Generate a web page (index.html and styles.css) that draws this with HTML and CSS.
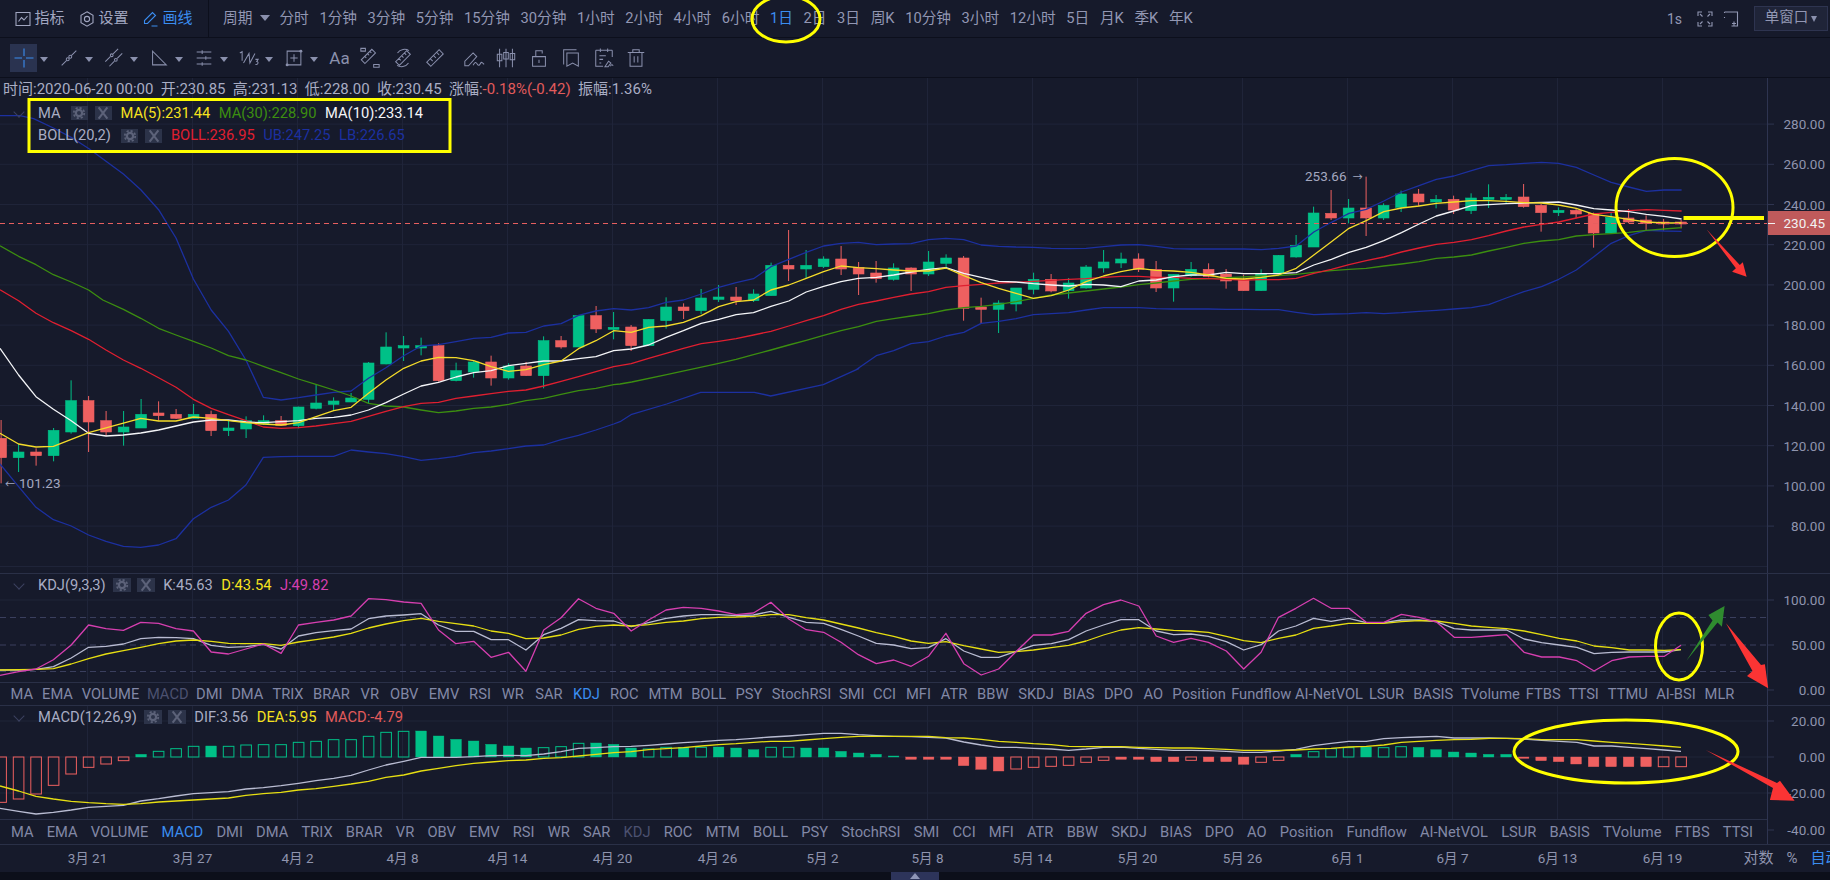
FILE: index.html
```html
<!DOCTYPE html>
<html lang="zh">
<head>
<meta charset="utf-8">
<title>K线图</title>
<link rel="stylesheet" href="styles.css">
</head>
<body>
<svg class="defs" width="0" height="0">
  <symbol id="gear" viewBox="0 0 16 16">
    <circle cx="8" cy="8" r="3.6" fill="none" stroke="#5c6279" stroke-width="2.6"/>
    <circle cx="8" cy="8" r="6" fill="none" stroke="#5c6279" stroke-width="2" stroke-dasharray="2.5 2.2"/>
  </symbol>
  <symbol id="cross" viewBox="0 0 16 16">
    <path d="M3 1.500l10 13M13 1.500L3 14.500" fill="none" stroke="#5c6279" stroke-width="2.4"/>
  </symbol>
</svg>

<header class="topbar">
  <nav class="menu">
    <a class="menu-item"><svg class="i16" viewBox="0 0 16 16"><path d="M1 1.500h14v13H1zM3.500 10.500l3-4 2.500 2.500 3.500-4"/></svg>指标</a>
    <a class="menu-item"><svg class="i16" viewBox="0 0 16 16"><path d="M8 .8l6 3.400v7.600l-6 3.400-6-3.400V4.200z"/><circle cx="8" cy="8" r="2.600"/></svg>设置</a>
    <a class="menu-item active"><svg class="i16" viewBox="0 0 16 16"><path d="M1.500 12.500V9.500L9.500 1.500l3 3-8 8zM8.500 15h6"/></svg>画线</a>
  </nav>
  <div class="periods">
    <span class="period-head">周期<i class="caret big"></i></span>
    <a>分时</a><a>1分钟</a><a>3分钟</a><a>5分钟</a><a>15分钟</a><a>30分钟</a><a>1小时</a><a>2小时</a><a>4小时</a><a>6小时</a><a class="on">1日</a><a>2日</a><a>3日</a><a>周K</a><a>10分钟</a><a>3小时</a><a>12小时</a><a>5日</a><a>月K</a><a>季K</a><a>年K</a>
  </div>
  <div class="top-right">
    <span class="speed">1s</span>
    <svg class="i16" viewBox="0 0 16 16"><path d="M1 5V1h4M11 1h4v4M15 11v4h-4M5 15H1v-4M3 3l2.500 2.500M13 3l-2.500 2.500M13 13l-2.500-2.500M3 13l2.500-2.500"/></svg>
    <svg class="i16 window-icon" viewBox="0 0 16 16"><path d="M1.500 1h13v14h-6M1.500 1v1M1.500 6v1M11 10.500v4M9 12.500h4"/></svg>
    <span class="window-select">单窗口<i class="caret small"></i></span>
  </div>
</header>

<div class="toolbar">
  <button class="tool selected"><svg class="i24 blue" viewBox="0 0 24 24"><path d="M2.500 12h7.500M14 12h7.500M12 2.500V10M12 14v7.500"/></svg></button><i class="caret tool-caret"></i>
  <button class="tool"><svg class="i24" viewBox="0 0 24 24"><path d="M4 20l5.500-5.500M14.500 9.500L20 4"/><circle cx="10.600" cy="13.400" r="1.600"/><circle cx="13.400" cy="10.600" r="1.600"/></svg></button><i class="caret tool-caret"></i>
  <button class="tool"><svg class="i24" viewBox="0 0 24 24"><path d="M2.500 16L8 10.500M11 7.500L16.500 2M7 21l5.500-5.500M15.500 12.500L21 7"/><circle cx="9.500" cy="9" r="1.500"/><circle cx="14" cy="14" r="1.500"/></svg></button><i class="caret tool-caret"></i>
  <button class="tool"><svg class="i24" viewBox="0 0 24 24"><path d="M5 4.500V19.500H20z"/></svg></button><i class="caret tool-caret"></i>
  <button class="tool"><svg class="i24" viewBox="0 0 24 24"><path d="M4 5.500h16M4 12h16M4 18.500h16M10 3.500v4M14 10v4M10 16.500v4"/></svg></button><i class="caret tool-caret"></i>
  <button class="tool"><svg class="i24" viewBox="0 0 24 24"><path d="M2 6.500l2.500-1.500v10M6 17.500L12 7l1 10.500L18.500 7M19 13.500h3l-1.500 2.200c2 .2 2 4-1.500 3.300"/></svg></button><i class="caret tool-caret"></i>
  <button class="tool"><svg class="i24" viewBox="0 0 24 24"><path d="M4.500 4.500h15v15h-15zM8 12h8M12 8v8"/><circle class="dot" cx="19.500" cy="4.500" r="1.600"/><circle class="dot" cx="4.500" cy="19.500" r="1.600"/></svg></button><i class="caret tool-caret"></i>
  <button class="tool plain text-tool">Aa</button>
  <button class="tool plain"><svg class="i24" viewBox="0 0 24 24"><path d="M6.500 18L18 6.500l-4-4L2.500 14zM6.500 10.500l1.500 1.500M9.500 7.500l1.500 1.500M12 5l1.500 1.500M2 1.500h5v3H2zM16 19h6v3h-6z"/></svg></button>
  <button class="tool plain"><svg class="i24" viewBox="0 0 24 24"><path d="M8 20L20 8l-4-4L4 16zM7.500 12.500l2 2M10.500 9.500l2 2M13.500 6.500l2 2M6 6.500C9 2 15 1.500 18.500 4M18 17.500C15 22 9 22.500 5.500 20"/></svg></button>
  <button class="tool plain"><svg class="i24" viewBox="0 0 24 24"><path d="M7.500 21L21 7.500 16.500 3 3 16.500zM7 13l2.500 2.500M10.500 9.500l2.500 2.500M14 6l2.500 2.500"/></svg></button>
  <button class="tool plain pen"><svg class="i24" viewBox="0 0 24 24"><path d="M2 20.500v-5l9-9 4 4-9 10zM11 20c2-4 3-4 4.500-1.500S18 20 19 18s2-1.500 4 1"/></svg></button>
  <button class="tool plain"><svg class="i24" viewBox="0 0 24 24"><path d="M5 2v20M12 2v20M19 2v20M2.500 8h5v7h-5zM9.500 6h5v7h-5zM16.500 7h5v7h-5z"/></svg></button>
  <button class="tool plain"><svg class="i24" viewBox="0 0 24 24"><path d="M5 10.500h14V21H5zM8.500 10.500V4h7v3M12 14v3.500"/></svg></button>
  <button class="tool plain"><svg class="i24" viewBox="0 0 24 24"><path d="M4 19V3h14M7.500 6.500H20V21l-6.200-3.500L7.500 21z"/></svg></button>
  <button class="tool plain"><svg class="i24" viewBox="0 0 24 24"><path d="M3 3.500h18M3 3.500V21h8M21 3.500V11M8 1.500v4M16 1.500v4M7 9.500h7M7 13.500h4M7 17.500h2M13 21.500l4-6 2.500 2-3 4zM19 21c1-2 2-2 3-.5"/></svg></button>
  <button class="tool plain"><svg class="i24" viewBox="0 0 24 24"><path d="M3 6h18M8.500 6V3h7v3M5.500 6v15h13V6M10 10v7M14 10v7"/></svg></button>
</div>

<main class="chart">
  <section class="pane pane-main">
    <div class="pane-body">
      <svg class="plot" id="plot-main" viewBox="0 78 1767 495"></svg>
      <div class="info">
        <span>时间:2020-06-20 00:00</span><span>开:230.85</span><span>高:231.13</span><span>低:228.00</span><span>收:230.45</span><span>涨幅:<em class="down">-0.18%(-0.42)</em></span><span>振幅:1.36%</span>
      </div>
      <div class="legend">
        <div class="legend-row">
          <b class="chev"></b><span class="name wide">MA</span>
          <i class="mini"><svg><use href="#gear"/></svg></i><i class="mini"><svg><use href="#cross"/></svg></i>
          <span class="c-yellow">MA(5):231.44</span><span class="c-green">MA(30):228.90</span><span class="c-white">MA(10):233.14</span>
        </div>
        <div class="legend-row">
          <span class="name wide">BOLL(20,2)</span>
          <i class="mini"><svg><use href="#gear"/></svg></i><i class="mini"><svg><use href="#cross"/></svg></i>
          <span class="c-red">BOLL:236.95</span><span class="c-blue">UB:247.25</span><span class="c-blue">LB:226.65</span>
        </div>
      </div>
    </div>
    <svg class="yaxis" id="axis-main" viewBox="1767 78 63 495"></svg>
  </section>

  <section class="pane pane-kdj">
    <div class="pane-body">
      <svg class="plot" id="plot-kdj" viewBox="0 574 1767 108"></svg>
      <div class="legend sub-legend">
        <div class="legend-row">
          <b class="chev"></b><span class="name">KDJ(9,3,3)</span>
          <i class="mini"><svg><use href="#gear"/></svg></i><i class="mini"><svg><use href="#cross"/></svg></i>
          <span class="c-soft">K:45.63</span><span class="c-yellow">D:43.54</span><span class="c-pink">J:49.82</span>
        </div>
      </div>
      <div class="tabs tabs-fit">
        <a>MA</a><a>EMA</a><a>VOLUME</a><a class="dim">MACD</a><a>DMI</a><a>DMA</a><a>TRIX</a><a>BRAR</a><a>VR</a><a>OBV</a><a>EMV</a><a>RSI</a><a>WR</a><a>SAR</a><a class="on">KDJ</a><a>ROC</a><a>MTM</a><a>BOLL</a><a>PSY</a><a>StochRSI</a><a>SMI</a><a>CCI</a><a>MFI</a><a>ATR</a><a>BBW</a><a>SKDJ</a><a>BIAS</a><a>DPO</a><a>AO</a><a>Position</a><a>Fundflow</a><a>AI-NetVOL</a><a>LSUR</a><a>BASIS</a><a>TVolume</a><a>FTBS</a><a>TTSI</a><a>TTMU</a><a>AI-BSI</a><a>MLR</a>
      </div>
    </div>
    <svg class="yaxis" id="axis-kdj" viewBox="1767 574 63 131"></svg>
  </section>

  <section class="pane pane-macd">
    <div class="pane-body">
      <svg class="plot" id="plot-macd" viewBox="0 706 1767 113"></svg>
      <div class="legend sub-legend">
        <div class="legend-row">
          <b class="chev"></b><span class="name">MACD(12,26,9)</span>
          <i class="mini"><svg><use href="#gear"/></svg></i><i class="mini"><svg><use href="#cross"/></svg></i>
          <span class="c-soft">DIF:3.56</span><span class="c-yellow">DEA:5.95</span><span class="down">MACD:-4.79</span>
        </div>
      </div>
      <div class="tabs tabs-flow">
        <a>MA</a><a>EMA</a><a>VOLUME</a><a class="on">MACD</a><a>DMI</a><a>DMA</a><a>TRIX</a><a>BRAR</a><a>VR</a><a>OBV</a><a>EMV</a><a>RSI</a><a>WR</a><a>SAR</a><a class="dim">KDJ</a><a>ROC</a><a>MTM</a><a>BOLL</a><a>PSY</a><a>StochRSI</a><a>SMI</a><a>CCI</a><a>MFI</a><a>ATR</a><a>BBW</a><a>SKDJ</a><a>BIAS</a><a>DPO</a><a>AO</a><a>Position</a><a>Fundflow</a><a>AI-NetVOL</a><a>LSUR</a><a>BASIS</a><a>TVolume</a><a>FTBS</a><a>TTSI</a>
      </div>
    </div>
    <svg class="yaxis" id="axis-macd" viewBox="1767 706 63 138"></svg>
  </section>

  <div class="timebar">
    <span>3月 21</span><span>3月 27</span><span>4月 2</span><span>4月 8</span><span>4月 14</span><span>4月 20</span><span>4月 26</span><span>5月 2</span><span>5月 8</span><span>5月 14</span><span>5月 20</span><span>5月 26</span><span>6月 1</span><span>6月 7</span><span>6月 13</span><span>6月 19</span>
    <div class="scale"><a>对数</a><a>%</a><a class="on">自动</a></div>
  </div>
</main>

<footer class="foot"><button class="handle"><i></i></button></footer>

<svg class="annot" id="annot" viewBox="0 0 1830 880">
  <rect class="mark" x="29" y="99.500" width="421" height="52"/>
  <ellipse class="mark" cx="786" cy="19" rx="34" ry="23"/>
  <ellipse class="mark" cx="1674.500" cy="207.500" rx="58.500" ry="49"/>
  <rect class="mark-fill" x="1683.500" y="216" width="80.500" height="4"/>
  <ellipse class="mark" cx="1679" cy="646.500" rx="23.500" ry="33.500"/>
  <ellipse class="mark" cx="1626" cy="751.500" rx="112" ry="31.500"/>
  <polygon class="arrow-red" points="1706.500,229.300 1739.800,265 1742.800,262.300 1746.600,276.700 1732.100,271.700 1735.900,268.300"/>
  <polygon class="arrow-green" points="1686.400,660.700 1712.500,620.500 1708.400,615 1724.600,606 1721.900,626.700 1717.500,622.500"/>
  <polygon class="arrow-red" points="1726,623.300 1761,665 1764.900,664.300 1768.200,688.300 1747,676 1752.500,671"/>
  <polygon class="arrow-red" points="1705.700,750 1777,783 1780,780.700 1794.600,800.700 1769.900,800 1773,788"/>
</svg>
<script src="chart.js"></script>
</body>
</html>
```

FILE: styles.css
```css
* { box-sizing: border-box; }
html, body { margin: 0; padding: 0; }
body {
  position: relative;
  width: 1830px;
  height: 880px;
  overflow: hidden;
  display: flex;
  flex-direction: column;
  background: #161a2b;
  color: #9297b3;
  font-family: Roboto, "Noto Sans CJK SC", "Liberation Sans", sans-serif;
  font-size: 15px;
  line-height: 1;
}
a, span, em, i, b { font-style: normal; font-weight: 400; }
.defs { position: absolute; }

.i16, .i24 { fill: none; stroke: currentColor; stroke-width: 1.1; flex: none; }
.i16 { width: 16px; height: 16px; }
.i24 { width: 22px; height: 22px; stroke: #8a90ad; }
.i24.blue { stroke: #3b8df0; width: 24px; height: 24px; }

.caret { display: inline-block; width: 0; height: 0; border-style: solid; border-color: #8a90ad transparent transparent; }
.caret.big { border-width: 6px 5px 0; margin-left: 8px; }
.caret.small { border-width: 6px 3.5px 0; margin-left: 3px; }
.tool-caret { border-width: 5px 4px 0; margin: 3px 7px 0 3px; width: 8px; flex: none; }

.topbar {
  height: 38px;
  flex: none;
  display: flex;
  align-items: center;
  border-bottom: 1px solid #0c0f1c;
}
.menu {
  height: 37px;
  width: 209px;
  flex: none;
  display: flex;
  align-items: center;
  gap: 14px;
  padding-left: 14.500px;
  border-right: 1px solid #0c0f1c;
  color: #a1a6c0;
}
.menu-item { display: flex; align-items: center; gap: 4px; }
.menu-item.active { color: #3b8df0; }
.periods { display: flex; align-items: center; gap: 10.600px; padding-left: 14px; color: #9297b3; font-size: 14.700px; }
.period-head { display: flex; align-items: center; margin-right: -1.600px; }
.periods .on { color: #3b8df0; }
.top-right { margin-left: auto; display: flex; align-items: center; padding-right: 2px; }
.speed { margin-right: 15px; font-size: 14px; }
.window-icon { margin: 0 15px 0 10px; }
.window-select {
  width: 74px;
  height: 25px;
  display: flex;
  align-items: center;
  justify-content: center;
  background: #1f2438;
  border: 1px solid #2e3450;
  font-size: 14.500px;
}

.toolbar {
  height: 40px;
  flex: none;
  display: flex;
  align-items: center;
  padding-left: 10px;
  border-bottom: 1px solid #0c0f1c;
}
.tool {
  width: 27px;
  height: 28px;
  padding: 0;
  flex: none;
  display: flex;
  align-items: center;
  justify-content: center;
  background: none;
  border: 0;
  color: #8a90ad;
  font: 17px Roboto, sans-serif;
}
.tool.selected { background: #2a3350; }
.tool.plain { width: 32.500px; }
.tool.text-tool { width: 29px; }
.tool.pen { margin-left: 6px; }
.dot { fill: #8a90ad; stroke: none; }

.chart { flex: none; display: flex; flex-direction: column; }
.pane { display: flex; border-bottom: 1px solid #2a3047; flex: none; }
.pane-main { height: 496px; }
.pane-kdj { height: 132px; }
.pane-macd { height: 139px; }
.pane-body { position: relative; width: 1767px; flex: none; display: flex; flex-direction: column; }
.plot { display: block; width: 1767px; flex: none; overflow: hidden; }
.pane-main .plot { height: 495px; }
.pane-kdj .plot { height: 108px; }
.pane-macd .plot { height: 113px; }
.yaxis { display: block; width: 63px; height: 100%; flex: none; overflow: hidden; }

.grid { stroke: #1f2439; stroke-width: 1; fill: none; }
.ref { stroke: #3a3f5e; stroke-width: 1; stroke-dasharray: 6 4; }
.ln { fill: none; stroke-width: 1.300; stroke-linejoin: round; }
.ln-ma5 { stroke: #f5dc2a; }
.ln-ma10 { stroke: #f4f5f8; }
.ln-ma30 { stroke: #3c8e10; }
.ln-boll { stroke: #e01f30; }
.ln-band { stroke: #1c30a0; }
.ln-k { stroke: #b9bcd2; }
.ln-d { stroke: #e6de12; }
.ln-j { stroke: #d63fb0; }
.up { fill: #00c087; stroke: #00c087; }
.dn { fill: #ee6060; stroke: #ee6060; }
.up-h { fill: none; stroke: #00c087; }
.dn-h { fill: none; stroke: #ee6060; }
.wick-up { stroke: #00c087; }
.wick-dn { stroke: #ee6060; }
.last-line { stroke: #e65f5f; stroke-dasharray: 5 4; stroke-width: 1; }
.note { fill: #a4a8c0; font-size: 13.500px; }
.note-arrow { font-size: 10px; }
.ax-line { stroke: #2e3450; stroke-width: 1; }
.ax-text { fill: #8f94ae; font-size: 13.500px; text-anchor: end; }
.ax-tag { fill: #bf5a5b; }
.ax-tag-text { fill: #f2f2f2; font-size: 13.500px; text-anchor: end; }
.ax-tick { stroke: #f2f2f2; stroke-width: 1; }

.info {
  position: absolute;
  top: 4px;
  left: 3px;
  display: flex;
  gap: 7.300px;
  color: #a9adc4;
  white-space: nowrap;
}
.down { color: #e25b5b; }
.legend { position: absolute; left: 38px; top: 24px; white-space: nowrap; font-size: 14.700px; }
.legend-row { position: relative; display: flex; align-items: center; height: 22.500px; gap: 8.500px; }
.name { color: #a9adc4; margin-right: -1px; }
.name.wide { margin-right: 1.500px; }
.chev {
  position: absolute;
  left: -23px;
  top: 6px;
  width: 8px;
  height: 8px;
  border: solid #3c4260;
  border-width: 0 1px 1px 0;
  transform: rotate(45deg);
}
.mini { width: 17.500px; height: 14px; display: flex; align-items: center; justify-content: center; background: #2c3349; margin-right: -2px; flex: none; }
.mini + .mini { margin-right: 0; }
.mini svg { width: 14px; height: 14px; }
.c-yellow { color: #f6e21e; }
.c-green { color: #3c8e10; }
.c-white { color: #f4f5f8; }
.c-red { color: #e01f30; }
.c-blue { color: #1c30a0; }
.c-soft { color: #a9adc4; }
.c-pink { color: #d63fb0; }
.sub-legend { top: 0; }

.tabs {
  display: grid;
  height: 24px;
  flex: none;
  align-items: center;
  border-top: 1px solid #2a3047;
  color: #8288a6;
  white-space: nowrap;
  overflow: hidden;
  font-size: 14.700px;
}
.tabs a { text-align: center; }
.tabs .dim { color: #4c5170; }
.tabs .on { color: #3b8df0; }
.tabs-fit {
  padding-left: 6px;
  grid-template-columns: 31.500px 40px 66px 48.500px 34.500px 41.500px 40px 47px 29.500px 39.500px 40px 32px 33.500px 39px 36px 39.500px 43px 43.500px 37px 68px 32.500px 33px 35px 36px 41.500px 45px 40.500px 39px 30.500px 61px 63.500px 72px 43px 50.500px 64px 41.500px 39.500px 48.500px 48px 39px;
}
.tabs-flow { display: flex; gap: 13.200px; padding-left: 11px; height: 25px; }
.tabs-flow a { flex: none; }

.timebar {
  position: relative;
  height: 27px;
  flex: none;
  display: flex;
  align-items: center;
  padding-left: 35px;
  color: #8f94ae;
  font-size: 13.500px;
  overflow: hidden;
}
.timebar > span { width: 105px; flex: none; text-align: center; }
.scale { display: flex; flex: none; gap: 13px; margin-left: 28.500px; font-size: 15px; white-space: nowrap; }
.scale .on { color: #3b8df0; }

.foot { flex: 1; background: #0c0f1a; display: flex; justify-content: center; align-items: stretch; }
.handle { width: 48px; padding: 0; border: 0; background: #2d345a; display: flex; align-items: center; justify-content: center; }
.handle i { width: 0; height: 0; border-style: solid; border-width: 0 5px 6px; border-color: transparent transparent #8f96b8; }

.annot { position: absolute; left: 0; top: 0; width: 1830px; height: 880px; pointer-events: none; }
.mark { fill: none; stroke: #ffff00; stroke-width: 3; }
.mark-fill { fill: #ffff00; }
.arrow-red { fill: #fb3434; }
.arrow-green { fill: #2f8b2f; }
```

FILE: chart.js
```js
(function () {
  var NS = 'http://www.w3.org/2000/svg';
  function el(parent, tag, attrs, text) {
    var n = document.createElementNS(NS, tag);
    for (var k in attrs) n.setAttribute(k, attrs[k]);
    if (text != null) n.textContent = text;
    parent.appendChild(n);
    return n;
  }
  function seg(ox, sx, oy, pts) {
    return pts.map(function (p) { return [ox + p[0] / sx, oy + p[1] / 3]; });
  }
  function draw(svg, pts, cls) {
    el(svg, 'polyline', {
      class: 'ln ' + cls,
      points: pts.map(function (p) { return p[0].toFixed(1) + ',' + p[1].toFixed(1); }).join(' ')
    });
  }
  function P(a) { var o = []; for (var i = 0; i < a.length; i += 2) o.push([a[i], a[i + 1]]); return o; }
  var A = function (a) { return seg(0, 2.529, 300, P(a)); };
  var T = function (a) { return seg(0, 2.529, 78, P(a)); };
  var B = function (a) { return seg(620, 2.24, 200, P(a)); };
  var L = function (a) { return seg(620, 3, 360, P(a)); };
  var C = function (a) { return seg(1230, 2.613, 130, P(a)); };
  var K1 = function (a) { return seg(0, 2.529, 570, P(a)); };
  var K2 = function (a) { return seg(620, 2.24, 570, P(a)); };
  var K3 = function (a) { return seg(1300, 2.958, 570, P(a)); };

  var cx = function (d) { return 88.6 + 17.5 * d; };
  var gridX = [];
  for (var g = 0; g < 16; g++) gridX.push(87.5 + 105 * g);
  var priceY = function (p) { return 164.3 + (260 - p) * 2.01; };

  /* ---- main pane ---- */
  var main = document.getElementById('plot-main');
  var p;
  for (p = 280; p >= 80; p -= 20) el(main, 'line', { class: 'grid', x1: 0, x2: 1767, y1: priceY(p), y2: priceY(p) });
  el(main, 'line', { class: 'grid', x1: 0, x2: 1767, y1: 566.5, y2: 566.5 });
  gridX.forEach(function (x) { el(main, 'line', { class: 'grid', x1: x, x2: x, y1: 78, y2: 573 }); });

  // candle: colour, body top, body bottom, wick top, wick bottom
  var c1 = [['r',415,473,360,550],['g',456,473,432,516],['r',456,467,445,497],['g',391,467,384,484],['g',302,396,241,401],['r',302,366,288,456],['r',362,396,333,408],['g',381,396,333,437],['g',343,384,297,384],['r',339,347,304,362],['r',343,355,327,357],['g',343,355,312,355],['r',343,392,332,408],['g',384,392,362,408],['g',362,387,349,414],['g',362,372,346,375],['r',362,376,348,377],['g',321,377,320,385],['g',309,325,253,328],['g',303,313,292,333],['g',294,306,279,306],['g',189,298,186,309],['g',141,192,97,193],['g',137,144,108,183],['g',137,144,113,166],['r',137,242,130,245],['g',212,242,188,244],['g',186,216,180,233],['r',186,234,167,257],['g',198,234,190,239],['r',198,227,186,228],['g',122,227,109,265],['r',122,141,108,146],['g',47,141,47,141],['r',47,87,18,99],['g',82,88,36,118]];
  var c2 = [['r',381,437,375,453],['g',358,437,358,437],['g',321,362,292,386],['r',321,332,310,357],['g',294,332,267,342],['g',291,298,255,306],['r',291,302,261,315],['g',282,302,268,306],['g',196,287,188,287],['r',196,207,90,243],['g',196,207,150,236],['g',177,200,169,204],['r',177,207,138,225],['r',203,222,186,285],['r',219,236,183,248],['g',204,238,190,242],['r',204,222,202,273],['g',186,222,153,228],['g',174,190,163,205],['r',174,325,168,362],['r',321,328,293,371],['g',309,328,301,399],['g',264,312,264,334],['g',238,268,218,283],['r',238,273,222,277],['g',249,272,234,296],['g',201,264,195,266],['g',186,204,150,218],['g',177,189,158,204],['r',177,208,160,216],['r',208,264,183,276],['g',223,264,223,305],['g',208,227,186,230],['r',208,229,190,232],['r',222,243,207,266]];
  var c3 = [['r',450,482,434,482],['g',432,482,418,483],['g',376,432,375,434],['g',346,381,315,383],['g',249,351,230,351],['r',250,264,180,270],['g',234,264,207,280],['r',234,264,140,318],['g',226,264,220,270],['g',192,232,182,246],['r',192,216,177,228],['g',208,216,195,235],['r',208,240,197,252],['g',204,242,190,252],['g',202,208,163,234],['g',202,208,192,220],['r',201,230,162,233],['r',226,248,222,305],['g',241,248,232,258],['r',241,252,234,265],['r',250,309,248,353],['g',262,309,248,310],['r',264,276,237,280],['r',270,280,256,300],['r',276,282,267,302],['r',276,282,270,295]];

  function candle(d, c, base) {
    var x = cx(d), y = function (v) { return base + v / 3; };
    var up = c[0] === 'g';
    el(main, 'line', { class: up ? 'wick-up' : 'wick-dn', x1: x, x2: x, y1: y(c[3]), y2: y(c[4]) });
    el(main, 'rect', { class: up ? 'up' : 'dn', x: x - 5.4, width: 10.8, y: y(c[1]), height: Math.max(1, (c[2] - c[1]) / 3), 'stroke-width': 0.6 });
  }
  c1.forEach(function (c, i) { candle(i - 5, c, 300); });
  c2.forEach(function (c, i) { candle(i + 31, c, 200); });
  c3.forEach(function (c, i) { candle(i + 66, c, 130); });

  var ub = T([0,113,50,113,85,122,135,150,180,178,225,212,268,250,312,288,356,335,401,395,445,480,489,603])
    .concat(A([534,30,578,94,622,180,666,292,711,300,755,293,799,285,844,277,888,273,932,235,976,203,1021,167,1065,138,1109,134,1153,125,1198,115,1242,112,1286,99,1330,97,1375,78,1419,71,1463,46,1507,33,1552,26]))
    .concat(B([25,330,64,323,103,307,142,300,182,282,221,262,260,248,299,236,338,200,378,178,417,157,456,138,495,130,534,127,574,134,613,132,652,131,691,119,730,115,770,119,809,135,848,139,887,141,926,142,966,145,1005,146,1044,145,1083,140,1122,135,1162,134,1201,139,1240,146,1279,147,1318,147,1358,147]))
    .concat(C([36,357,82,359,127,355,173,348,219,306,265,277,311,250,356,238,402,213,448,186,494,167,539,148,585,138,631,122,676,107,722,104,768,100,814,97,859,100,905,112,951,135,996,157,1042,171,1088,184,1134,180,1180,180]));
  var lb = A([0,492,47,560,91,622,135,659,180,678,224,705,268,724,312,739,356,742,401,735,445,716,489,656,534,622,578,600,622,555,666,472,711,470,755,469,799,469,844,469,888,450,932,456,976,461,1021,470,1065,481,1109,476,1153,469,1198,458,1242,453,1286,446,1330,438,1375,435,1419,419,1463,406,1507,390,1552,372])
    .concat(L([0,185,35,163,140,132,242,97,403,97,452,108,610,74,716,26]))
    .concat(B([528,510,574,467,613,452,652,431,691,425,730,408,770,397,809,370,848,364,887,356,926,344,966,341,1005,338,1044,330,1083,323,1122,323,1162,323,1201,326,1240,327,1279,327,1318,327,1358,328]))
    .concat(C([36,538,82,539,127,539,173,547,219,554,265,552,311,551,356,548,402,551,448,548,494,544,539,541,585,537,631,533,676,524,722,504,768,485,814,470,859,448,905,420,951,380,996,340,1042,317,1088,301,1134,303,1180,304]));
  var boll = T([0,635,47,668])
    .concat(A([91,40,135,68,180,92,224,118,268,150,312,180,356,205,401,233,445,262,489,298,534,325,578,344,622,362,666,381,711,385,755,383,799,378,844,371,888,364,932,349,976,334,1021,320,1065,310,1109,307,1153,295,1198,288,1242,281,1286,274,1330,270,1375,258,1419,244,1463,230,1507,215,1552,200]))
    .concat(B([25,491,64,475,103,460,142,445,182,431,221,424,260,416,299,405,338,394,378,378,417,362,456,347,495,328,534,313,574,303,613,292,652,282,691,275,730,262,770,257,809,253,848,249,887,247,926,244,966,241,1005,238,1044,236,1083,232,1122,229,1162,229,1201,232,1240,232,1279,235,1318,236,1358,238]))
    .concat(C([36,450,82,449,127,449,173,445,219,430,265,418,311,404,356,392,402,381,448,366,494,354,539,343,585,337,631,329,676,317,722,303,768,291,814,283,859,276,905,264,951,252,996,247,1042,242,1088,239,1134,241,1180,243]));
  var ma30 = T([0,503,47,535,91,560,135,590,180,612,224,636])
    .concat(A([260,0,312,28,356,55,401,85,445,105,489,124,534,144,578,167,622,180,666,199,711,218,755,237,799,253,844,270,888,288,932,310,976,318,1021,321,1065,330,1109,338,1153,333,1198,325,1242,321,1286,313,1330,302,1375,295,1419,283,1463,272,1507,265,1552,254]))
    .concat(L([0,72,35,66,140,44]))
    .concat(B([221,490,260,478,299,464,338,450,378,435,417,421,456,406,495,392,534,380,574,364,613,356,652,348,691,341,730,330,770,323,809,319,848,313,887,305,926,295,966,285,1005,279,1044,273,1083,267,1122,261,1162,254,1201,249,1240,243,1279,238,1318,236,1358,233]))
    .concat(C([36,441,82,438,127,437,173,433,219,427,265,422,311,418,356,415,402,408,448,402,494,395,539,385,585,381,631,375,676,363,722,352,768,340,814,333,859,329,905,318,951,314,996,311,1042,307,1088,301,1134,297,1180,293]));
  var ma10 = A([0,145,47,225,91,290,135,328,180,362,224,400,268,408,312,405,356,399,401,390,445,378,489,366,534,360,578,360,622,366,666,368,711,365,755,362,799,355,844,352,888,345,932,330,976,308,1021,282,1065,258,1109,247,1153,231,1198,218,1242,212,1286,197,1330,190,1375,183,1419,183,1463,176,1507,170,1552,152])
    .concat(B([25,447,64,435,103,412,142,392,182,370,221,358,260,344,299,338,338,319,378,303,417,276,456,259,495,245,534,235,574,232,613,225,652,216,691,208,730,203,770,220,809,232,848,244,887,246,926,251,966,255,1005,258,1044,253,1083,255,1122,260,1162,243,1201,240,1240,230,1279,225,1318,225,1358,217]))
    .concat(C([36,431,82,431,127,431,173,428,219,405,265,388,311,367,356,352,402,332,448,308,494,282,539,258,585,243,631,227,676,224,722,221,768,219,814,217,859,216,905,225,951,236,996,240,1042,245,1088,253,1134,259,1180,267]));
  var ma5 = A([0,400,47,432,91,441,135,439,224,398,356,355,401,363,445,363,489,351,534,355,578,362,622,368,666,372,711,375,755,368,844,332,888,322,932,280,976,240,1021,205,1065,183,1109,172,1153,173,1198,182,1242,200,1286,214,1330,209,1375,194,1419,183,1463,146,1507,122,1552,92])
    .concat(B([25,397,64,382,103,378,142,367,182,347,221,320,260,305,299,300,338,270,378,255,417,235,456,215,495,198,534,203,574,206,613,210,652,213,691,213,730,204,770,227,809,248,848,265,887,280,926,295,966,287,1005,270,1044,245,1083,228,1122,215,1162,205,1201,211,1240,213,1279,217,1318,225,1358,235]))
    .concat(C([36,447,82,442,127,435,173,415,219,375,265,335,311,295,356,272,402,245,448,234,494,228,539,220,585,216,631,212,676,212,722,214,768,218,814,219,859,225,905,235,951,253,996,260,1042,268,1088,276,1134,279,1180,279]));

  draw(main, ub, 'ln-band');
  draw(main, lb, 'ln-band');
  draw(main, ma30, 'ln-ma30');
  draw(main, boll, 'ln-boll');
  draw(main, ma10, 'ln-ma10');
  draw(main, ma5, 'ln-ma5');
  el(main, 'line', { class: 'last-line', x1: 0, x2: 1767, y1: 223.5, y2: 223.5 });
  var n1 = el(main, 'text', { class: 'note', x: 1305, y: 180.5 }, '253.66 ');
  el(n1, 'tspan', { class: 'note-arrow', dx: 3 }, '→');
  var n2 = el(main, 'text', { class: 'note', x: 5, y: 487.5 });
  el(n2, 'tspan', { class: 'note-arrow' }, '←');
  el(n2, 'tspan', { dx: 4 }, '101.23');

  /* ---- KDJ pane ---- */
  var kdj = document.getElementById('plot-kdj');
  gridX.forEach(function (x) { el(kdj, 'line', { class: 'grid', x1: x, x2: x, y1: 574, y2: 682 }); });
  el(kdj, 'line', { class: 'grid', x1: 0, x2: 1767, y1: 600, y2: 600 });
  [617.5, 645, 671.5].forEach(function (y) { el(kdj, 'line', { class: 'ref', x1: 0, x2: 1767, y1: y, y2: y }); });
  var J = K1([0,316,47,305,91,297,135,269,180,225,224,165,268,176,312,181,356,157,401,160,445,176,489,183,534,246,578,252,622,237,666,222,711,250,755,165,799,157,844,150,888,138,932,86,976,89,1021,96,1065,100,1109,180,1153,221,1198,214,1242,262,1286,247,1330,304,1375,180,1419,143,1463,86,1507,115,1552,130])
    .concat(K2([25,183,64,150,103,120,142,112,182,115,221,123,260,134,299,129,338,97,378,147,417,179,456,187,495,217,534,254,574,281,613,270,652,289,691,259,730,190,770,281,809,315,848,297,887,245,926,195,966,195,1005,184,1044,130,1083,104,1122,90,1162,108,1201,198,1240,217,1279,205,1318,217,1358,243,1397,297,1436,247,1475,142,1514,115]))
    .concat(K3([40,85,92,115,144,115,196,157,248,157,300,133,352,142,404,156,456,202,507,202,559,198,611,194,663,247,715,261,767,261,819,272,870,303,922,272,974,261,1026,259,1078,259,1127,226]));
  var Kl = K1([0,300,47,300,91,298,135,290,180,264,224,232,268,229,312,222,356,206,401,202,445,203,489,206,534,226,578,232,622,230,666,223,711,237,755,198,799,188,844,182,888,177,932,146,976,138,1021,135,1065,131,1109,165,1153,184,1198,184,1242,209,1286,209,1330,240,1375,194,1419,175,1463,149,1507,152,1552,153])
    .concat(K2([25,170,64,158,103,145,142,138,182,134,221,134,260,137,299,135,338,124,378,142,417,157,456,160,495,178,534,198,574,220,613,225,652,236,691,233,730,206,770,243,809,262,848,262,887,244,926,226,966,221,1005,209,1044,183,1083,165,1122,149,1162,149,1201,183,1240,194,1279,192,1318,199,1358,215,1397,240,1436,224,1475,183,1514,168]))
    .concat(K3([40,145,92,154,144,145,196,158,248,158,300,150,352,150,404,155,456,176,507,180,559,180,611,180,663,207,715,218,767,225,819,232,870,251,922,247,974,246,1026,246,1078,246,1127,239]));
  var Dl = K1([0,300,91,298,135,296,180,282,224,266,268,252,312,242,356,232,401,221,445,213,489,210,534,214,578,220,622,221,666,221,711,226,755,216,799,209,844,201,888,190,932,174,976,162,1021,152,1065,145,1109,154,1153,161,1198,168,1242,183,1286,190,1330,206,1375,204,1419,195,1463,178,1507,169,1552,165])
    .concat(K2([25,168,64,164,103,157,142,153,182,146,221,142,260,141,299,139,338,134,378,134,417,143,456,150,495,162,534,174,574,188,613,199,652,213,691,220,730,215,770,227,809,237,848,247,887,245,926,240,966,233,1005,226,1044,213,1083,195,1122,180,1162,173,1201,177,1240,181,1279,183,1318,187,1358,199,1397,212,1436,218,1475,205,1514,195]))
    .concat(K3([40,175,92,168,144,160,196,160,248,160,300,155,352,152,404,153,456,160,507,168,559,172,611,176,663,183,715,194,767,205,819,213,870,228,922,233,974,240,1026,240,1078,241,1127,239]));
  draw(kdj, Kl, 'ln-k');
  draw(kdj, Dl, 'ln-d');
  draw(kdj, J, 'ln-j');

  /* ---- MACD pane ---- */
  var macd = document.getElementById('plot-macd');
  gridX.forEach(function (x) { el(macd, 'line', { class: 'grid', x1: x, x2: x, y1: 706, y2: 819 }); });
  [721, 757, 793].forEach(function (y) { el(macd, 'line', { class: 'grid', x1: 0, x2: 1767, y1: y, y2: y }); });
  var bars = ['r697','r687','r672','r646','r612','r592','r582','r572','G553','g544','g536','g529','G528','g529','g525','g524','g524','g517','g514','g509','g509','g499','g487','g484','G483','G498','G508','G513','G523','G528','G534','g533','g530','g520','G519','G523',
    'G534','g537','g532','G532','g532','G531','G534','G539','g532','g532','G534','G534','G544','G549','G553','G558','R568','R568','R568','R587','R598','R603','r597','r592','r589','r586','r577','r571','R568','R568','R575','R575','r571','R575','R575','R583','r577','r571','G553',
    'g545','g536','g533','G531','g533','g530','G532','G539','G546','G549','G553','G553','R565','R572','R575','R582','R590','R590','R590','R590','r590','r590'];
  bars.forEach(function (b, i) {
    var k = b[0], z = +b.slice(1), x = cx(i - 5);
    var y2 = 570 + z / 3, top = Math.min(757, y2), h = Math.abs(y2 - 757);
    var cls = { G: 'up', g: 'up-h', R: 'dn', r: 'dn-h' }[k];
    var filled = k === 'G' || k === 'R';
    el(macd, 'rect', { class: cls, x: x - 5.3, width: 10.6, y: top, height: Math.max(h, 1), 'stroke-width': filled ? 0.4 : 1 });
  });
  var dif = K1([0,715,47,724,91,732,135,727,180,720,224,712,268,709,312,706,356,693,401,686,445,678,489,671,534,668,578,665,622,657,666,653,711,647,755,640,799,632,844,625,888,616,932,600,976,585,1021,574,1065,562,1109,562,1153,562,1198,560,1242,557,1286,556,1330,557,1375,552,1419,545,1463,535,1507,533,1552,530])
    .concat(K2([25,529,64,526,103,522,142,518,182,515,221,511,260,509,299,505,338,501,378,498,417,494,456,490,495,490,534,494,574,497,613,499,652,500,691,502,730,504,770,516,809,525,848,532,887,532,926,535,966,537,1005,541,1044,537,1083,532,1122,531,1162,535,1201,538,1240,541,1279,541,1318,542,1358,544,1397,547,1436,547,1475,543,1514,538]))
    .concat(K3([40,527,92,520,144,514,196,514,248,506,300,503,352,501,404,499,456,504,507,504,559,504,611,505,663,507,715,511,767,514,819,517,870,528,922,528,974,532,1026,536,1078,540,1127,544]));
  var dea = K1([0,648,47,663,91,679,135,687,180,694,224,698,268,701,312,703,356,701,401,696,445,693,489,690,534,687,578,684,622,676,666,671,711,667,755,660,799,656,844,649,888,642,932,634,976,622,1021,615,1065,603,1109,595,1153,587,1198,580,1242,576,1286,572,1330,570,1375,565,1419,563,1463,558,1507,553,1552,548])
    .concat(K2([25,545,64,539,103,536,142,533,182,528,221,524,260,521,299,517,338,514,378,514,417,510,456,506,495,502,534,499,574,499,613,499,652,499,691,499,730,503,770,504,809,508,848,514,887,517,926,521,966,524,1005,529,1044,530,1083,530,1122,530,1162,532,1201,533,1240,534,1279,534,1318,536,1358,538,1397,541,1436,541,1475,541,1514,540]))
    .concat(K3([40,537,92,535,144,531,196,529,248,525,300,517,352,514,404,511,456,509,507,508,559,505,611,505,663,506,715,509,767,509,819,509,870,513,922,517,974,520,1026,524,1078,528,1127,532]));
  draw(macd, dif, 'ln-k');
  draw(macd, dea, 'ln-d');

  /* ---- y axes ---- */
  function axis(id, y0, y1, labels) {
    var s = document.getElementById(id);
    el(s, 'line', { class: 'ax-line', x1: 1767.5, x2: 1767.5, y1: y0, y2: y1 });
    labels.forEach(function (l) {
      el(s, 'line', { class: 'ax-line', x1: 1768, x2: 1774, y1: l[1], y2: l[1] });
      el(s, 'text', { class: 'ax-text', x: 1825, y: l[1] + 5 }, l[0]);
    });
    return s;
  }
  var labels = [];
  for (p = 280; p >= 80; p -= 20) labels.push([p.toFixed(2), priceY(p)]);
  var ax = axis('axis-main', 78, 573, labels);
  el(ax, 'rect', { class: 'ax-tag', x: 1768, width: 62, y: 211, height: 24 });
  el(ax, 'line', { class: 'ax-tick', x1: 1768, x2: 1775, y1: 223.5, y2: 223.5 });
  el(ax, 'text', { class: 'ax-tag-text', x: 1825, y: 228 }, '230.45');
  axis('axis-kdj', 574, 705, [['100.00', 600], ['50.00', 645], ['0.00', 690]]);
  axis('axis-macd', 706, 844, [['20.00', 721], ['0.00', 757], ['-20.00', 793], ['-40.00', 830]]);
})();
```
